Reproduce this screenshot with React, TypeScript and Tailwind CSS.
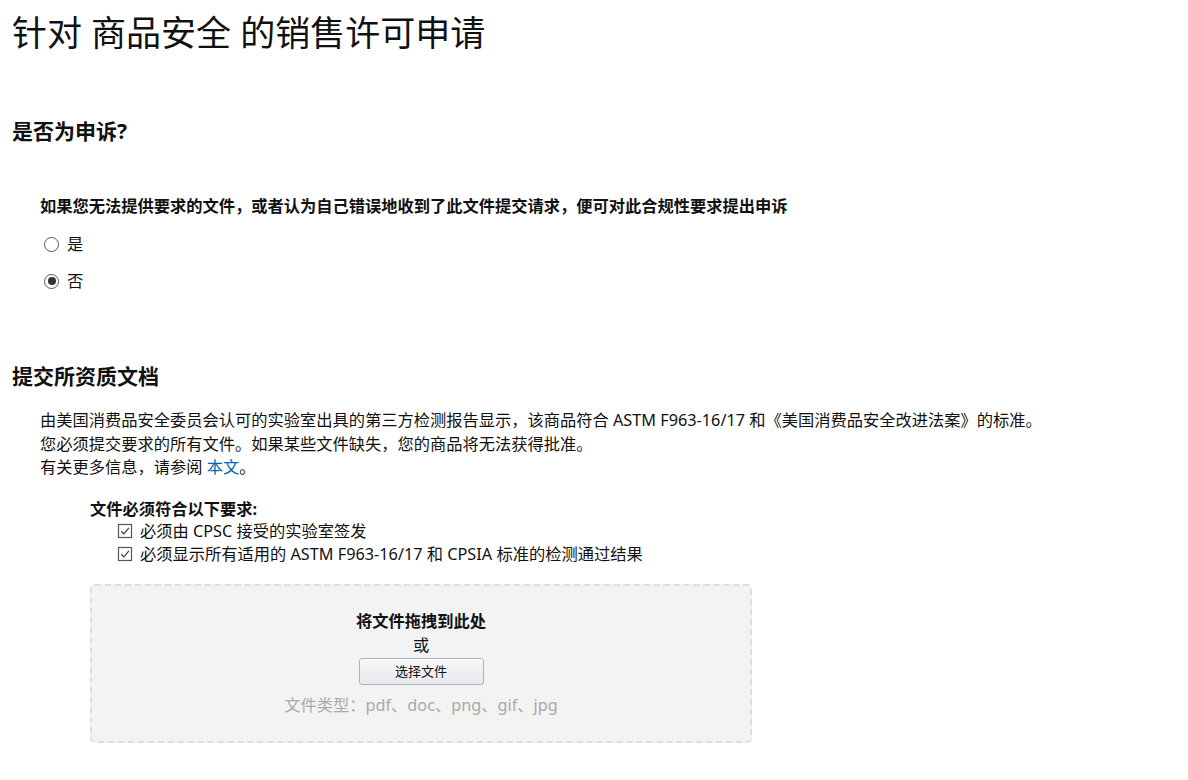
import React, { useState } from 'react';

const font = { fontFamily: '"Noto Sans", "Noto Sans CJK SC", sans-serif' };

function Radio({ checked, label, onClick }: { checked: boolean; label: string; onClick: () => void }) {
  return (
    <button onClick={onClick} className="flex items-center gap-[8px] text-[16.25px] leading-[24px] text-[#111] ml-[4px]">
      <span className="flex h-[15px] w-[15px] items-center justify-center rounded-full border border-[#555]">
        {checked && <span className="h-[8px] w-[8px] rounded-full bg-[#333]" />}
      </span>
      {label}
    </button>
  );
}

function CheckIcon() {
  return (
    <svg width="16" height="16" viewBox="0 0 16 16" className="shrink-0">
      <rect x="1.5" y="1.5" width="13" height="13" fill="none" stroke="#555" strokeWidth="1.2" />
      <path d="M4.2 8.2 L6.9 10.9 L11.9 4.9" fill="none" stroke="#444" strokeWidth="1.3" />
    </svg>
  );
}

export default function App() {
  const [appeal, setAppeal] = useState(false);

  return (
    <div className="min-h-screen bg-white px-[12px] pt-[10px] text-[#111]" style={font}>
      <h1 className="text-[35px] leading-[46px] font-normal">针对 商品安全 的销售许可申请</h1>

      {/* Appeal */}
      <h2 className="mt-[61px] text-[21px] leading-[28px] font-bold">是否为申诉?</h2>
      <div className="pl-[28px]">
        <p className="mt-[49px] text-[16.25px] leading-[24px] font-bold">
          如果您无法提供要求的文件，或者认为自己错误地收到了此文件提交请求，便可对此合规性要求提出申诉
        </p>
        <div className="mt-[14px] flex flex-col items-start gap-[13px]">
          <Radio checked={appeal} label="是" onClick={() => setAppeal(true)} />
          <Radio checked={!appeal} label="否" onClick={() => setAppeal(false)} />
        </div>
      </div>

      {/* Documents */}
      <h2 className="mt-[69px] text-[21px] leading-[28px] font-bold">提交所资质文档</h2>
      <div className="pl-[28px]">
        <div className="mt-[19px] text-[16.25px] leading-[23.5px]">
          <p>由美国消费品安全委员会认可的实验室出具的第三方检测报告显示，该商品符合 ASTM F963-16/17 和《美国消费品安全改进法案》的标准。</p>
          <p>您必须提交要求的所有文件。如果某些文件缺失，您的商品将无法获得批准。</p>
          <p>
            有关更多信息，请参阅 <a href="#" className="text-[#0066c0]">本文</a>。
          </p>
        </div>

        <div className="ml-[50px] mt-[18px] text-[16.25px] leading-[22.5px]">
          <p className="font-bold">文件必须符合以下要求:</p>
          <ul className="pl-[27px]">
            <li className="flex items-center gap-[7px]">
              <CheckIcon />
              必须由 CPSC 接受的实验室签发
            </li>
            <li className="flex items-center gap-[7px]">
              <CheckIcon />
              必须显示所有适用的 ASTM F963-16/17 和 CPSIA 标准的检测通过结果
            </li>
          </ul>

          <div className="mt-[19px] flex h-[159px] w-[662px] flex-col items-center rounded-[5px] border-2 border-dashed border-[#dedede] bg-[#f3f3f3] pt-[24px]">
            <p className="font-bold leading-[22px]">将文件拖拽到此处</p>
            <p className="mt-[2px] leading-[22px]">或</p>
            <button className="mt-[2px] h-[27px] w-[125px] rounded-[3px] border border-[#adb1b8] bg-gradient-to-b from-[#f7f8fa] to-[#e7e9ec] text-[13px] leading-[25px] text-[#111] shadow-[0_1px_0_rgba(255,255,255,0.6)_inset]">
              选择文件
            </button>
            <p className="mt-[9px] leading-[22px] text-[#aaa]">文件类型：pdf、doc、png、gif、jpg</p>
          </div>
        </div>
      </div>
    </div>
  );
}
